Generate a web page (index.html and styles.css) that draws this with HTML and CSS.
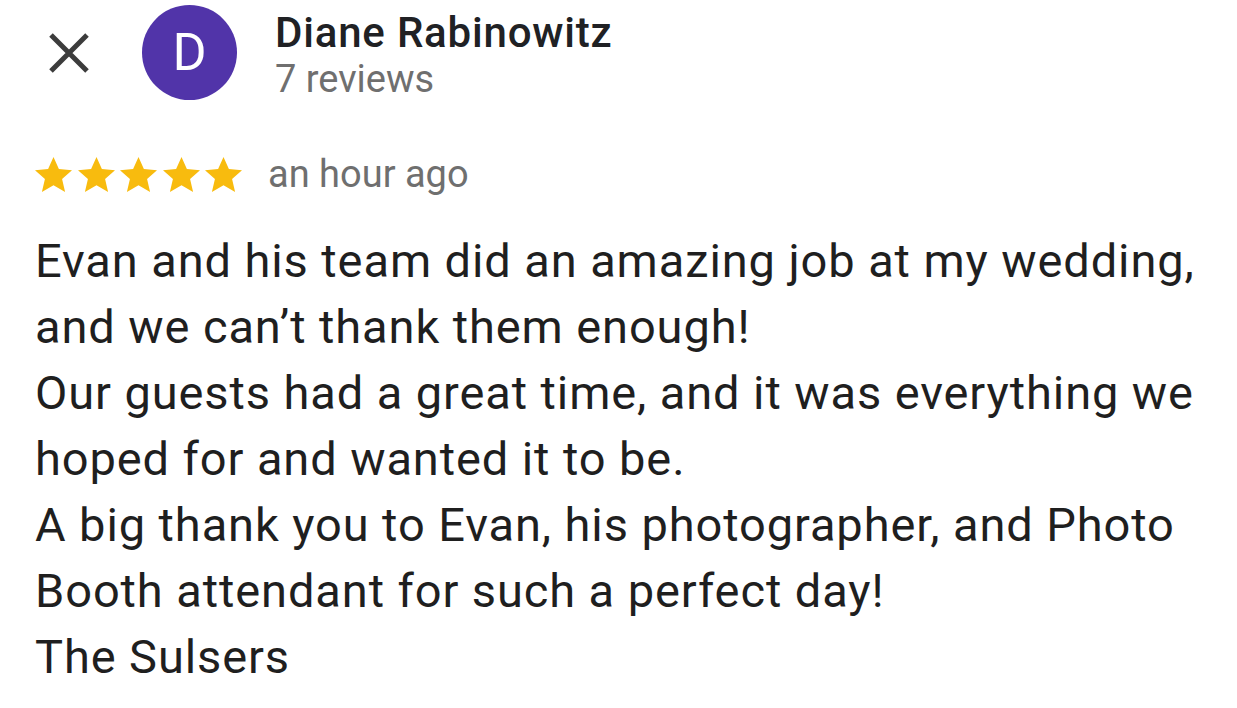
FILE: index.html
```html
<!DOCTYPE html>
<html lang="en">
<head>
    <meta charset="UTF-8">
    <meta name="viewport" content="width=device-width, initial-scale=1.0">
    <title>Review - Diane Rabinowitz</title>
    <link rel="stylesheet" href="styles.css">
</head>
<body>
    <div class="review">
        <header class="review-header">
            <button class="close-btn" aria-label="Close">
                <svg width="42" height="40" viewBox="0 0 42 40">
                    <path d="M3 2 L39 38 M39 2 L3 38" stroke="#3c3c3c" stroke-width="5" fill="none"/>
                </svg>
            </button>
            <div class="avatar">D</div>
            <div class="author">
                <div class="author-name">Diane Rabinowitz</div>
                <div class="author-meta">7 reviews</div>
            </div>
        </header>

        <div class="rating-row">
            <div class="stars">
                <svg class="star" viewBox="1 0.8 22 20.8"><path d="M12 0.8l3.2 7.2 7.8.7-5.9 5.2 1.8 7.7L12 17.6l-6.9 4 1.8-7.7L1 8.7l7.8-.7z"/></svg>
                <svg class="star" viewBox="1 0.8 22 20.8"><path d="M12 0.8l3.2 7.2 7.8.7-5.9 5.2 1.8 7.7L12 17.6l-6.9 4 1.8-7.7L1 8.7l7.8-.7z"/></svg>
                <svg class="star" viewBox="1 0.8 22 20.8"><path d="M12 0.8l3.2 7.2 7.8.7-5.9 5.2 1.8 7.7L12 17.6l-6.9 4 1.8-7.7L1 8.7l7.8-.7z"/></svg>
                <svg class="star" viewBox="1 0.8 22 20.8"><path d="M12 0.8l3.2 7.2 7.8.7-5.9 5.2 1.8 7.7L12 17.6l-6.9 4 1.8-7.7L1 8.7l7.8-.7z"/></svg>
                <svg class="star" viewBox="1 0.8 22 20.8"><path d="M12 0.8l3.2 7.2 7.8.7-5.9 5.2 1.8 7.7L12 17.6l-6.9 4 1.8-7.7L1 8.7l7.8-.7z"/></svg>
            </div>
            <span class="review-date">an hour ago</span>
        </div>

        <p class="review-text">
            Evan and his team did an amazing job at my wedding,<br>
            and we can’t thank them enough!<br>
            Our guests had a great time, and it was everything we<br>
            hoped for and wanted it to be.<br>
            A big thank you to Evan, his photographer, and Photo<br>
            Booth attendant for such a perfect day!<br>
            The Sulsers
        </p>
    </div>
</body>
</html>
```

FILE: styles.css
```css
body {
    margin: 0;
    padding: 0;
    background-color: #ffffff;
    font-family: Roboto, "Noto Sans", Arial, sans-serif;
    color: #1f1f1f;
}

.review {
    width: 1237px;
    height: 708px;
    overflow: hidden;
}

.review-header {
    display: flex;
    align-items: flex-start;
    padding: 5px 0 0 48px;
}

.close-btn {
    background: none;
    border: none;
    padding: 0;
    margin-top: 28px;
    width: 42px;
    height: 40px;
    cursor: pointer;
}

.close-btn svg {
    display: block;
}

.avatar {
    width: 95px;
    height: 95px;
    margin-left: 52px;
    border-radius: 50%;
    background-color: #5134a9;
    color: #ffffff;
    font-size: 52px;
    font-weight: 400;
    display: flex;
    align-items: center;
    justify-content: center;
}

.author {
    margin-left: 38px;
    margin-top: 5px;
}

.author-name {
    font-size: 42px;
    font-weight: 500;
    line-height: 46px;
    letter-spacing: 0.8px;
    color: #202124;
}

.author-meta {
    font-size: 38px;
    line-height: 46px;
    color: #6f6f6f;
}

.rating-row {
    display: flex;
    align-items: center;
    height: 44px;
    margin-top: 50px;
    padding-left: 35px;
}

.stars {
    display: flex;
    gap: 5.5px;
}

.star {
    width: 37px;
    height: 35px;
    fill: #f8bb0e;
    display: block;
}

.review-date {
    margin-left: 26px;
    font-size: 38px;
    color: #6f6f6f;
}

.review-text {
    margin: 32px 0 0 35px;
    font-size: 47px;
    line-height: 66px;
    letter-spacing: 0.9px;
    color: #1f1f1f;
}
```
